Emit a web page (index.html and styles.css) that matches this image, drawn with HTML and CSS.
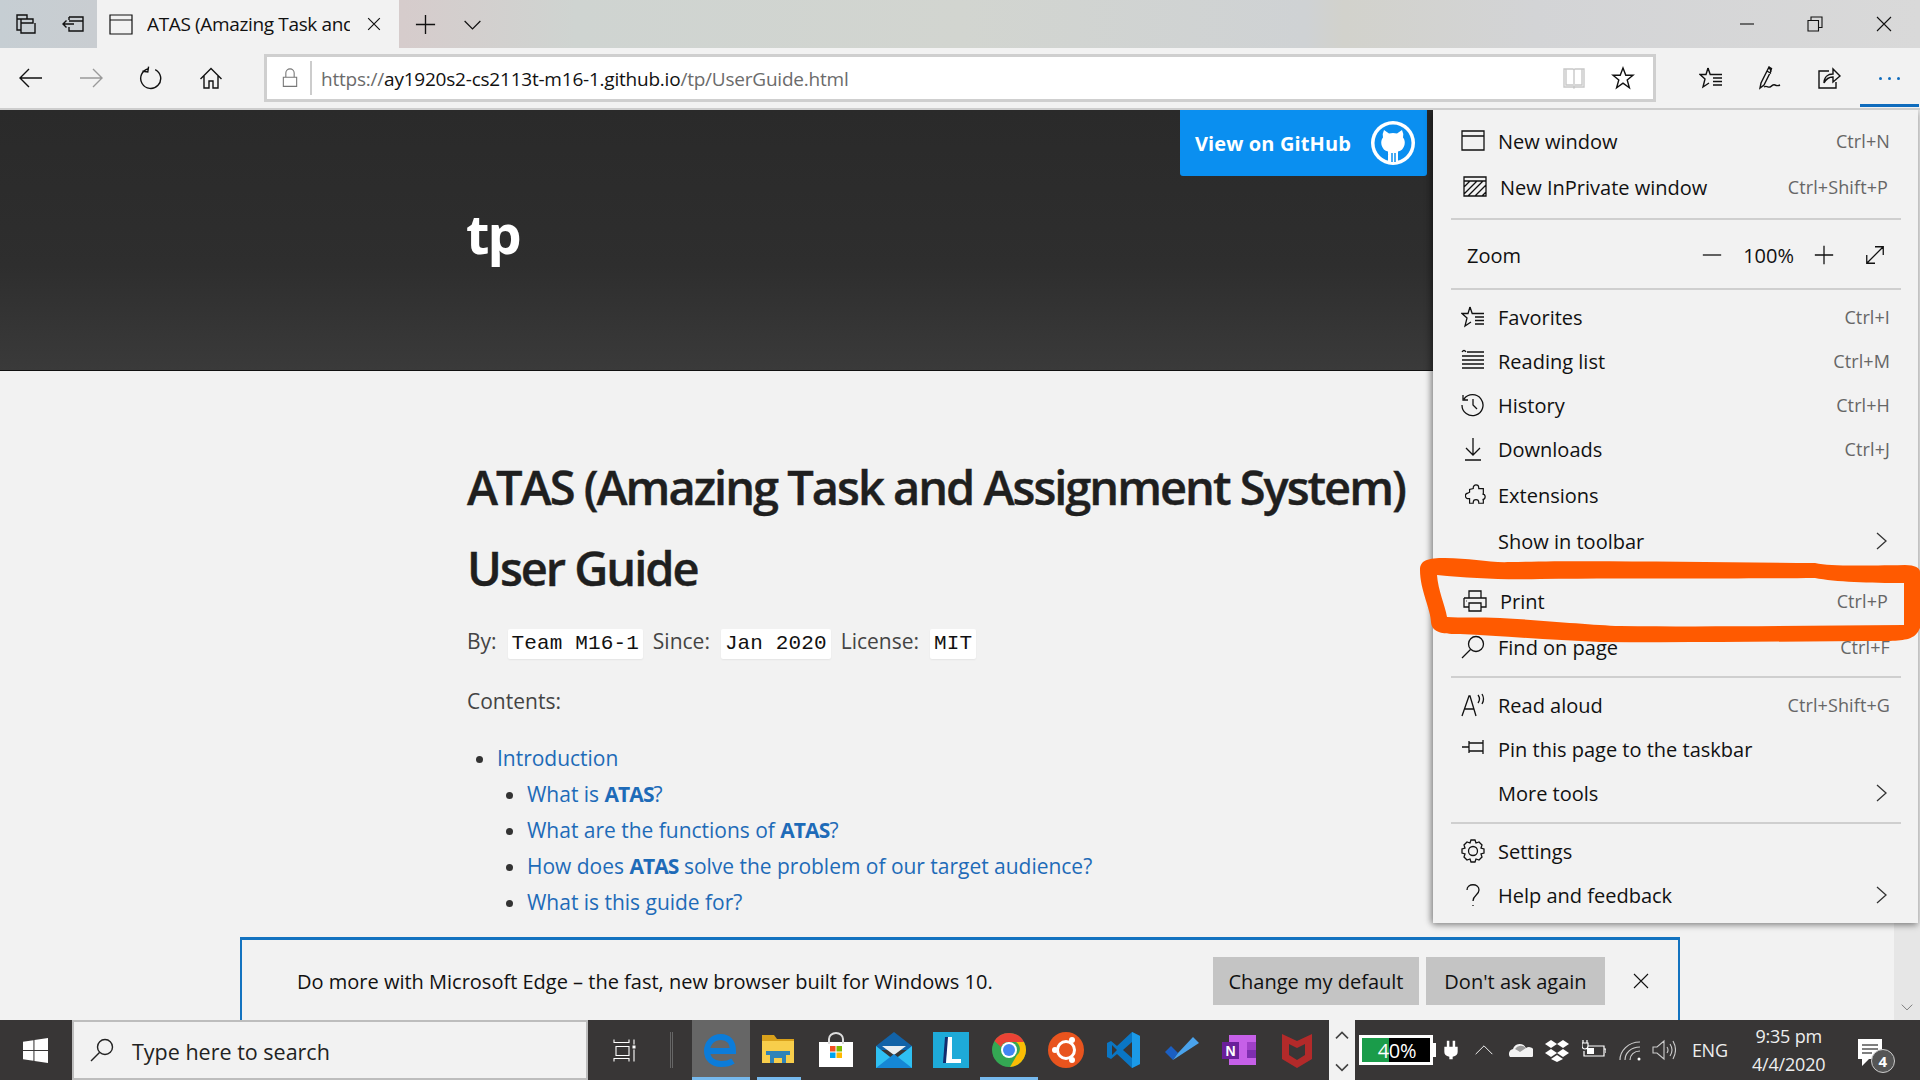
FILE: index.html
```html
<!DOCTYPE html>
<html lang="en">
<head>
<meta charset="utf-8">
<title>ATAS (Amazing Task and Assignment System)</title>
<link rel="stylesheet" href="styles.css">
</head>
<body>
<div class="window">
  <header class="titlebar">
    <span class="tslot"><svg class="ic" viewBox="0 0 24 24"><path d="M3 3h10v4H3zM3 7v11h4M7 7h12v4H7zM7 11v10h14V11M13 7V3"/></svg></span>
    <span class="tslot"><svg class="ic" viewBox="0 0 24 24"><path d="M8 5h14v14H8v-4M8 9h14M8 5v3M13 12H2M5.500 8.500L2 12l3.500 3.500"/></svg></span>
    <div class="tab">
      <svg class="ic tab-ic" viewBox="0 0 24 24"><path d="M1 3h22v19H1zM1 8h22"/></svg>
      <span class="tab-title">ATAS (Amazing Task and Assignment System) User Guide</span>
      <svg class="ic tab-x" viewBox="0 0 24 24"><path d="M5 5l14 14M19 5L5 19"/></svg>
    </div>
    <span class="tslot plus"><svg class="ic big" viewBox="0 0 24 24"><path d="M12 2v20M2 12h20"/></svg></span>
    <span class="tslot chev"><svg class="ic" viewBox="0 0 24 24"><path d="M3 8l9 9 9-9"/></svg></span>
    <div class="winctl">
      <span class="wslot"><svg class="ic sm" viewBox="0 0 16 16"><path d="M1 8h14"/></svg></span>
      <span class="wslot"><svg class="ic sm" viewBox="0 0 16 16"><path d="M1 4.500h10.500V15H1zM4 4.500V1h11v10.500h-3.500"/></svg></span>
      <span class="wslot"><svg class="ic sm" viewBox="0 0 16 16"><path d="M1 1l14 14M15 1L1 15"/></svg></span>
    </div>
  </header>

  <nav class="toolbar">
    <span class="nslot"><svg class="ic" viewBox="0 0 24 24"><path d="M23 12H1M10 3l-9 9 9 9"/></svg></span>
    <span class="nslot dim"><svg class="ic" viewBox="0 0 24 24"><path d="M1 12h22M14 3l9 9-9 9"/></svg></span>
    <span class="nslot"><svg class="ic" viewBox="0 0 24 24"><path d="M15 3a10 10 0 1 1-7 .2M8 1v5.500H2.500" transform="rotate(8 12 12)"/></svg></span>
    <span class="nslot"><svg class="ic" viewBox="0 0 24 24"><path d="M1.500 13L12 2.500 22.500 13M5 10v12h5v-7h4v7h5V10"/></svg></span>
    <div class="address">
      <svg class="ic lock" viewBox="0 0 24 24"><path d="M4 11h16v11H4zM7 11V6a5 5 0 0 1 10 0v5"/></svg>
      <span class="addr-sep"></span>
      <span class="url"><span class="url-dim">https://</span>ay1920s2-cs2113t-m16-1.github.io<span class="url-dim">/tp/UserGuide.html</span></span>
      <svg class="ic reader" viewBox="0 0 24 24"><path d="M2 3h9l1 1 1-1h9v18h-9l-1 1-1-1H2zM12 4v17M4 3v16h7M20 3v16h-7"/></svg>
      <svg class="ic star" viewBox="0 0 24 24"><path d="M12 2l2.800 7.200H22l-5.800 4.800 2.200 7.800L12 17.200 5.600 21.800 7.800 14 2 9.200h7.200z"/></svg>
    </div>
    <div class="nav-right">
      <span class="rslot"><svg class="ic" viewBox="0 0 24 24"><path d="M9 2l2.200 6.500H23M14 12h9M14 15.500h9M14 19h9M9 2L7 8.500H1l5 4.500-2 8 6-4"/></svg></span>
      <span class="rslot"><svg class="ic" viewBox="0 0 24 24"><path d="M11 1L3 17l-1 5 4-3 7-14zM9 5l4 2.500M11 1l2.500 1.500-1 3M6 21c3-2 4 1 6 0s3-3 5-2 3 1 5 0"/></svg></span>
      <span class="rslot"><svg class="ic" viewBox="0 0 24 24"><path d="M12 5H2v17h17v-6M7 17c0-6 4-9 9-9V3l7 7-7 6v-5c-4 0-7 2-9 6z"/></svg></span>
      <span class="rslot dots"><i></i><i></i><i></i></span>
    </div>
  </nav>

  <main class="page">
    <section class="hero"><h2 class="project">tp</h2></section>
    <article class="content">
      <h1>ATAS (Amazing Task and Assignment System) User Guide</h1>
      <p class="meta">By: <code>Team M16-1</code> Since: <code>Jan 2020</code> License: <code>MIT</code></p>
      <p class="contents">Contents:</p>
      <ul class="toc">
        <li><a>Introduction</a>
          <ul>
            <li><a>What is <b>ATAS</b>?</a></li>
            <li><a>What are the functions of <b>ATAS</b>?</a></li>
            <li><a>How does <b>ATAS</b> solve the problem of our target audience?</a></li>
            <li><a>What is this guide for?</a></li>
          </ul>
        </li>
      </ul>
    </article>

    <a class="gh-btn"><span>View on GitHub</span>
      <svg class="gh-ic" viewBox="0 0 44 44"><circle cx="22" cy="22" r="22" fill="#fff"/><circle cx="22" cy="22" r="18.500" fill="#0a8ff0"/><path fill="#fff" d="M13 9l5 3.500q4-1 8 0L31 9q2 4 1 7.500 2.500 3 1.500 7.500-1.500 5.500-6.500 6.500V41h-10V30.500Q12 29.500 10.500 24q-1-4.500 1.500-7.500Q11 13 13 9z"/><path fill="none" stroke="#0a8ff0" stroke-width="1.500" d="M10 32q4 2 7 1M21 32v9M24 32v9"/></svg>
    </a>

    <div class="scrollbar"><svg class="ic sb-down" viewBox="0 0 24 24"><path d="M3 8l9 9 9-9"/></svg></div>

    <aside class="banner">
      <span class="banner-text">Do more with Microsoft Edge – the fast, new browser built for Windows 10.</span>
      <span class="banner-btn btn-a">Change my default</span>
      <span class="banner-btn btn-b">Don't ask again</span>
      <svg class="ic banner-x" viewBox="0 0 16 16"><path d="M1 1l14 14M15 1L1 15"/></svg>
    </aside>

    <div class="menu">
      <div class="item g11"><svg class="ic mi" viewBox="0 0 24 24"><path d="M1 2h22v19H1zM1 7h22"/></svg><span class="label">New window</span><span class="key">Ctrl+N</span></div>
      <div class="item g4 shift"><svg class="ic mi" viewBox="0 0 24 24"><path d="M1 2h22v19H1zM1 6h22M1 12l6-6M1 19L14 6M5 21L20 6M12 21l11-11M19 21l4-4"/></svg><span class="label">New InPrivate window</span><span class="key">Ctrl+Shift+P</span></div>
      <hr class="sep g9">
      <div class="item zoom g15"><span class="zoom-label">Zoom</span>
        <svg class="ic zm z-minus" viewBox="0 0 24 24"><path d="M2 12h20"/></svg><span class="zoom-val">100%</span>
        <svg class="ic zm z-plus" viewBox="0 0 24 24"><path d="M12 2v20M2 12h20"/></svg>
        <svg class="ic zm z-full" viewBox="0 0 24 24"><path d="M3 21L21 3M12 3h9v9M3 12v9h9"/></svg></div>
      <hr class="sep g11">
      <div class="item g7"><svg class="ic mi" viewBox="0 0 24 24"><path d="M9 2l2.200 6.500H23M14 12h9M14 15.500h9M14 19h9M9 2L7 8.500H1l5 4.500-2 8 6-4"/></svg><span class="label">Favorites</span><span class="key">Ctrl+I</span></div>
      <div class="item g2"><svg class="ic mi" viewBox="0 0 24 24"><path d="M6 3h17M1 7h22M1 11h22M1 15h22M1 19h22M1 3q2-3 4 0"/></svg><span class="label">Reading list</span><span class="key">Ctrl+M</span></div>
      <div class="item g2"><svg class="ic mi" viewBox="0 0 24 24"><path d="M3 6a10.500 10.500 0 1 1-2 6M2 2v5h5M12 6v6l4 4"/></svg><span class="label">History</span><span class="key">Ctrl+H</span></div>
      <div class="item g2"><svg class="ic mi" viewBox="0 0 24 24"><path d="M12 1v17M5 11l7 7 7-7M4 23h16"/></svg><span class="label">Downloads</span><span class="key">Ctrl+J</span></div>
      <div class="item g4 shift ext"><svg class="ic mi" viewBox="0 0 24 24"><path d="M9 5V4a3 3 0 0 1 6 0v1h5v6h-1a3 3 0 0 1 0 6h1v4h-5v-1a3 3 0 0 0-6 0v1H5v-5H4a3 3 0 0 1-1-6l2-1V6z"/></svg><span class="label">Extensions</span></div>
      <div class="item g4"><span class="mi"></span><span class="label">Show in toolbar</span><svg class="ic arrow" viewBox="0 0 11 18"><path d="M1 1l9 8-9 8"/></svg></div>
      <div class="item g18 shift"><svg class="ic mi" viewBox="0 0 24 24"><path d="M6 9V2h12v7M1 9h22v9h-5M6 18H1V9M6 14h12v8H6zM3.500 12h.5"/></svg><span class="label">Print</span><span class="key">Ctrl+P</span></div>
      <div class="item g4"><svg class="ic mi" viewBox="0 0 24 24"><circle cx="15" cy="9" r="7.500"/><path d="M9.500 14.500L1 23"/></svg><span class="label">Find on page</span><span class="key">Ctrl+F</span></div>
      <hr class="sep g7">
      <div class="item g7"><svg class="ic mi" viewBox="0 0 24 24"><path d="M1 23L8 3h1l6 20M4 16h9M17 2q3 4 0 8M21 1q3 5 0 10"/></svg><span class="label">Read aloud</span><span class="key">Ctrl+Shift+G</span></div>
      <div class="item g2"><svg class="ic mi" viewBox="0 0 24 24"><path d="M1 10h7M8 4v12M8 6h4l3 0h7V3M22 3v14M22 14h-7l-3 0H8"/></svg><span class="label">Pin this page to the taskbar</span></div>
      <div class="item g2"><span class="mi"></span><span class="label">More tools</span><svg class="ic arrow" viewBox="0 0 11 18"><path d="M1 1l9 8-9 8"/></svg></div>
      <hr class="sep g7">
      <div class="item g7"><svg class="ic mi" viewBox="0 0 24 24"><circle cx="12" cy="12" r="4.500"/><path d="M10 1h4l1 3 3-1 3 3-1 3 3 1v4l-3 1 1 3-3 3-3-1-1 3h-4l-1-3-3 1-3-3 1-3-3-1v-4l3-1-1-3 3-3 3 1z"/></svg><span class="label">Settings</span></div>
      <div class="item g2"><svg class="ic mi" viewBox="0 0 24 24"><path d="M6 7c0-7 12-7 12 0 0 5-6 5-6 11M12 22v1"/></svg><span class="label">Help and feedback</span><svg class="ic arrow" viewBox="0 0 11 18"><path d="M1 1l9 8-9 8"/></svg></div>
    </div>
  </main>

  <footer class="taskbar">
    <span class="start"><svg class="win" viewBox="0 0 24 24"><path fill="#fff" d="M0 3.500l10-1.400v9.300H0zM11 2l13-2v11.400H11zM0 12.500h10v9.400L0 20.500zM11 12.500h13V24l-13-2z"/></svg></span>
    <div class="search"><svg class="ic s-ic" viewBox="0 0 24 24"><circle cx="15" cy="9" r="7.500"/><path d="M9.500 14.500L1 23"/></svg><span>Type here to search</span></div>
    <div class="taskview">
      <svg class="ic tv" viewBox="0 0 24 24"><path d="M1 1v3h15V1M3 8h13v9H3zM1 23v-3h15v3M21 1v5M21 11v12"/><rect x="19.500" y="7" width="3" height="3" fill="#fff" stroke="none"/></svg>
      <span class="tv-sep"></span>
    </div>
    <div class="apps">
      <span class="app active run"><svg viewBox="0 0 36 36"><path fill="none" stroke="#0c7cd9" stroke-width="6" d="M6 19h24C30 10 25 5 18 5 10 5 4 11 4 19c0 8 6 13 14 13 5 0 9-1 12-3"/></svg></span>
      <span class="app run2"><svg viewBox="0 0 36 36"><path fill="#d9a11b" d="M2 3h12l3 4h17v5H2z"/><path fill="#f8ce4b" d="M2 9h32v22H2z"/><path fill="#2f83b8" d="M6 19h24v4h-4v8h-4v-5h-8v5h-4v-8H6z"/></svg></span>
      <span class="app"><svg viewBox="0 0 36 36"><path fill="#fff" d="M1 10h34v25H1z"/><path fill="none" stroke="#ddd" stroke-width="2" d="M11 12V7a7 6 0 0 1 14 0v5"/><path fill="#f25022" d="M12 14h5.500v5.500H12z"/><path fill="#7fba00" d="M18.500 14H24v5.500h-5.500z"/><path fill="#00a4ef" d="M12 20.500h5.500V26H12z"/><path fill="#ffb900" d="M18.500 20.500H24V26h-5.500z"/></svg></span>
      <span class="app"><svg viewBox="0 0 36 36"><path fill="#1263a8" d="M0 14L18 0l18 14v4H0z"/><path fill="#e9eef2" d="M6 14h24L18 23z"/><path fill="#2fc0f2" d="M0 14l18 14 18-14v22H0z"/><path fill="#1587d6" d="M0 36l18-14 18 14z"/></svg></span>
      <span class="app"><svg viewBox="0 0 36 36"><path fill="#1eaad8" d="M0 0h36v36H0z"/><path fill="#122c6e" d="M12 5h4l-3 26h-3z"/><path fill="#fff" d="M15 5h4v22h9v4H13z"/></svg></span>
      <span class="app run"><svg viewBox="0 0 36 36"><circle cx="18" cy="18" r="17" fill="#34a853"/><path fill="#ea4335" d="M3.500 9A17 17 0 0 1 33 10H18a8 8 0 0 0-8 5z"/><path fill="#fbbc05" d="M33 10a17 17 0 0 1-14 25l7-12a8 8 0 0 0-1-13z"/><circle cx="18" cy="18" r="8" fill="#fff"/><circle cx="18" cy="18" r="6" fill="#4285f4"/></svg></span>
      <span class="app"><svg viewBox="0 0 36 36"><circle cx="18" cy="18" r="18" fill="#e8541e"/><circle cx="18" cy="18" r="8.500" fill="none" stroke="#fff" stroke-width="3"/><circle cx="7" cy="18" r="3" fill="#fff"/><circle cx="24" cy="8" r="3" fill="#fff"/><circle cx="24" cy="28" r="3" fill="#fff"/></svg></span>
      <span class="app"><svg viewBox="0 0 36 36"><path fill="#0a76c4" d="M26 0l8 4v28l-8 4-15-14-6 5-4-2V11l4-2 6 5z"/><path fill="#1b9ae8" d="M26 0l8 4v28l-8 4z"/><path fill="#383636" d="M6 13v10l5-5zM26 10l-9 8 9 8z"/></svg></span>
      <span class="app"><svg viewBox="0 0 36 36"><path fill="#1b5fc2" d="M1 20l6-6 7 7-5 7z"/><path fill="#4aa3ec" d="M14 21L29 5l6 6-26 17z"/></svg></span>
      <span class="app"><svg viewBox="0 0 36 36"><path fill="#c660e8" d="M8 3h27v30H8z"/><path fill="#a040c8" d="M26 10h9v8h-9z"/><path fill="#7e2eb0" d="M26 18h9v8h-9z"/><path fill="#6a1f9a" d="M1 10h17v17H1z"/><text class="on-n" x="9.500" y="24">N</text></svg></span>
      <span class="app"><svg viewBox="0 0 36 36"><path fill="#b32a2a" d="M3 2l15 7 15-7v25l-15 9-15-9z"/><path fill="#383636" d="M10 12l8 4 8-4v11l-8 5-8-5z"/></svg></span>
    </div>
    <div class="updown"><svg class="ic ud" viewBox="0 0 24 24"><path d="M3 17l9-9 9 9"/></svg><svg class="ic ud" viewBox="0 0 24 24"><path d="M3 8l9 9 9-9"/></svg></div>
    <div class="battery"><span class="bat-fill"></span><span class="bat-text">40%</span></div>
    <div class="tray">
      <svg class="tr plug" viewBox="0 0 24 24"><path fill="#fff" d="M7 1h3v7H7zM14 1h3v7h-3zM4 8h16v6a8 6 0 0 1-6 6v3h-4v-3a8 6 0 0 1-6-6z"/></svg>
      <svg class="tr t-chev ic" viewBox="0 0 24 24"><path d="M2 17l10-10 10 10"/></svg>
      <svg class="tr t-cloud" viewBox="0 0 24 24"><path fill="#f2f2f2" d="M1 19a5 5 0 0 1 3-8 7 7 0 0 1 13-1 5 5 0 0 1 6 9z"/><path fill="#9a9a9a" d="M6 11a7 7 0 0 1 11-1l-6 4q-3-2-5-3z"/></svg>
      <svg class="tr t-drop" viewBox="0 0 24 24"><path fill="#fff" d="M6 2l6 4-6 4-6-4zM18 2l6 4-6 4-6-4zM6 11l6 4-6 4-6-4zM18 11l6 4-6 4-6-4zM12 17l6 4-6 3-6-3z"/></svg>
      <svg class="tr t-bat ic" viewBox="0 0 24 24"><path d="M6 8h16v10H2v-5M22 11h2v4M1 2v3M5 2v3M0 5h6v3a3 3 0 0 1-6 0z"/><rect x="5" y="10" width="7" height="6" fill="#fff" stroke="none"/></svg>
      <svg class="tr t-wifi ic" viewBox="0 0 24 24"><path d="M1 22C1 13 9 4 21 4M6 22c0-7 6-13 15-13M11 22c0-5 4-9 10-9"/><circle cx="20" cy="21" r="1.500" fill="#fff" stroke="none"/></svg>
      <svg class="tr t-spk ic" viewBox="0 0 24 24"><path d="M1 9h4l7-6v18l-7-6H1zM15 9q2 3 0 6M18 6q4 6 0 12M21 3q5 9 0 18"/></svg>
      <span class="eng">ENG</span>
      <div class="clock"><span>9:35 pm</span><span>4/4/2020</span></div>
      <div class="notif"><svg class="n-bubble" viewBox="0 0 26 30"><path fill="#fff" d="M1 1h24v20H12l-7 7v-7H1z"/><path stroke="#555" stroke-width="1.500" d="M5 7h16M5 11h16M5 15h10"/></svg><span class="badge">4</span></div>
    </div>
  </footer>
</div>

<svg class="scribble" viewBox="0 0 1920 1080"><path fill="#ff5a00" fill-rule="evenodd" d="M1420 570C1420 560 1428 558 1445 558C1470 558 1490 563 1510 562C1580 560 1700 562 1815 563C1830 566 1850 566 1905 565C1915 565 1920 568 1920 572L1920 628C1915 640 1905 640 1890 641C1800 641 1700 643 1600 642C1550 640 1500 636 1460 634C1445 634 1432 634 1431 622C1431 610 1420 590 1420 570ZM1437 575C1470 578 1500 580 1540 579C1640 578 1750 579 1815 578C1835 582 1870 583 1904 583L1904 625C1800 626 1700 627 1620 626C1590 625 1540 620 1500 618C1480 617 1460 618 1447 617C1445 605 1438 590 1437 575Z"/></svg>
</body>
</html>
```

FILE: styles.css
```css
* { box-sizing: border-box; }
html, body { margin: 0; padding: 0; height: 100%; overflow: hidden; }
body { font-family: "Open Sans", "Noto Sans", sans-serif; color: #111; background: #f2f2f2; }
.window { width: 1920px; height: 1080px; display: flex; flex-direction: column; }
.ic { fill: none; stroke: currentColor; stroke-width: 1.4; width: 24px; height: 24px; display: block; flex: none; }

/* title bar */
.titlebar { height: 48px; display: flex; align-items: center; padding-left: 2px; color: #111;
  background: linear-gradient(90deg, #c6ced3 0, #c9cdd1 5%, #d6cccc 21%, #cfd4d1 30%, #d2d5d0 50%, #cfd2d4 68%, #d2d2cc 70%, #d3d4d6 80%, #d9d9d9 100%); }
.tslot { width: 47px; display: flex; justify-content: center; }
.tslot + .tslot { margin-right: 1px; }
.tab { width: 302px; height: 48px; background: #f2f2f2; display: flex; align-items: center; padding-left: 12px; margin-right: 0; }
.tab-ic { width: 24px; height: 24px; stroke-width: 1.200; }
.tab-title { width: 203px; margin-left: 14px; white-space: nowrap; overflow: hidden; font-size: 19px; letter-spacing: -.35px; }
.tab-x { width: 20px; height: 20px; margin-left: 14px; }
.plus { margin-left: 3px; }
.plus .big { width: 23px; height: 23px; }
.chev { margin-left: 0; width: 46px; }
.chev .ic { width: 21px; height: 21px; }
.winctl { margin-left: auto; display: flex; padding-right: 2px; }
.wslot { width: 68.500px; display: flex; justify-content: center; }
.ic.sm { width: 16px; height: 16px; stroke-width: 1.100; }

/* toolbar */
.toolbar { height: 62px; display: flex; align-items: center; padding: 0 1px; background: #f2f2f2; border-bottom: 2px solid #cdcdcd; color: #111; position: relative; }
.nslot { width: 60px; display: flex; justify-content: center; }
.dim { color: #9a9a9a; }
.address { width: 1392px; height: 48px; margin-left: 23px; background: #fff; border: 3px solid #cfcfcf; display: flex; align-items: center; padding-left: 13px; }
.lock { width: 20px; height: 22px; color: #777; stroke-width: 1.300; }
.addr-sep { width: 2px; height: 34px; background: #ccc; margin-left: 10px; }
.url { margin-left: 9px; padding-top: 1px; font-size: 19px; letter-spacing: -.22px; white-space: nowrap; color: #111; }
.url-dim { color: #6b6b6b; }
.reader { margin-left: auto; color: #c8c8c8; }
.star { margin: 0 18px 0 25px; width: 24px; height: 24px; }
.nav-right { margin-left: auto; display: flex; align-items: center; }
.rslot { width: 59px; display: flex; justify-content: center; }
.rslot.dots { width: 61px; padding-left: 2px; }
.dots { gap: 6px; align-items: center; height: 24px; position: relative; }
.dots i { width: 3px; height: 3px; border-radius: 50%; background: #0f6cbd; display: block; }
.dots::after { content: ""; position: absolute; left: 2px; right: 0; top: 38px; height: 3px; background: #0f6cbd; }

/* page */
.page { flex: 1; position: relative; overflow: hidden; background: #f2f2f2; }
.hero { height: 261px; background: linear-gradient(180deg, #2a2a2a 0, #2e2e2e 60%, #3a3a3a 100%); border-bottom: 1px solid #111; padding: 87px 0 0 466px; }
.project { margin: 0; color: #fff; font-size: 54px; line-height: 72px; font-weight: 700; letter-spacing: -2px; }
.content { padding: 76px 0 0 467px; width: 1440px; color: #444; font-size: 21px; }
h1 { margin: 0; width: 960px; font-size: 47px; line-height: 81px; font-weight: 600; letter-spacing: -2.020px; color: #1f1f1f; -webkit-text-stroke: .4px #1f1f1f; }
.meta { margin: 16px 0 0; line-height: 32px; }
code { display: inline-block; font-family: "Liberation Mono", monospace; font-size: 21px; line-height: 30px; background: #fff; padding: 0 4px; border-radius: 2px; color: #111; letter-spacing: .13px; box-shadow: 0 1px 2px rgba(0,0,0,.06); margin: 0 4.500px 0 5.500px; }
.contents { margin: 26px 0 0; line-height: 32px; }
.toc { margin: 23px 0 0; padding: 0 0 0 30px; line-height: 36px; letter-spacing: -.02px; list-style-type: disc; }
.toc ul { margin: 0; padding: 0 0 0 30px; list-style-type: disc; }
.toc a { color: #1e6bb8; }
.toc b { font-weight: 700; letter-spacing: -.9px; }
.toc li::marker { color: #333; }

.gh-btn { position: absolute; left: 1180px; top: 0; width: 247px; height: 66px; background: #0a8ff0; color: #fff; font-weight: 700; font-size: 20px; letter-spacing: .12px; display: flex; align-items: center; justify-content: space-between; padding: 0 12px 0 15px; border-radius: 0 0 3px 3px; }
.gh-ic { width: 44px; height: 44px; }

.scrollbar { position: absolute; right: 0; top: 0; bottom: 0; width: 26px; background: #e6e6e6; }
.sb-down { position: absolute; left: 6px; bottom: 6px; width: 14px; height: 14px; color: #666; }

.banner { position: absolute; left: 240px; top: 827px; width: 1440px; height: 90px; background: #f2f2f2; border: 2px solid #1373c0; border-top-width: 3px; border-bottom: none; display: flex; align-items: center; padding: 0 0 5px 55px; }
.banner-text { font-size: 20px; width: 916px; white-space: nowrap; }
.banner-btn { height: 48px; background: #c4c4c4; display: flex; align-items: center; justify-content: center; font-size: 20px; }
.btn-a { width: 206px; }
.btn-b { width: 179px; margin-left: 7px; }
.banner-x { width: 16px; height: 16px; margin-left: 28px; stroke-width: 1.100; }

/* menu */
.menu { position: absolute; left: 1433px; top: 0; width: 485px; height: 813px; background: #f2f2f2; box-shadow: -3px 0 6px rgba(0,0,0,.28), 0 3px 6px rgba(0,0,0,.28); display: flex; flex-direction: column; align-items: stretch; }
.item { height: 42px; flex: none; display: flex; align-items: center; padding: 0 28px 2px 28px; font-size: 20px; white-space: nowrap; }
.mi { width: 24px; height: 24px; margin-right: 13px; stroke-width: 1.300; color: #111; flex: none; }
.shift { padding-left: 30px; padding-right: 30px; }
.ext .mi { margin-left: 2px; margin-right: 11px; width: 22px; height: 22px; }
.label { flex: 1; }
.key { color: #666; font-size: 18px; letter-spacing: .1px; }
.arrow { width: 11px; height: 18px; margin-right: 3px; color: #333; stroke-width: 1.300; }
.sep { height: 2px; border: 0; background: #cfcfcf; margin-left: 18px; margin-right: 17px; flex: none; margin-bottom: 0; }
.zoom { padding-left: 34px; padding-right: 29px; }
.zoom-label { flex: 1; }
.zm { width: 22px; height: 22px; }
.zoom-val { margin: 0 19px 0 20px; }
.z-full { margin-left: 29px; margin-right: 3px; }
.g1 { margin-top: 1px; } .g2 { margin-top: 2px; } .g3 { margin-top: 3px; } .g4 { margin-top: 4px; }
.g5 { margin-top: 5px; } .g6 { margin-top: 6px; } .g7 { margin-top: 7px; } .g8 { margin-top: 8px; }
.g9 { margin-top: 9px; } .g11 { margin-top: 11px; } .g15 { margin-top: 15px; } .g18 { margin-top: 18px; }

.scribble { position: absolute; left: 0; top: 0; width: 1920px; height: 1080px; pointer-events: none; }

/* taskbar */
.taskbar { height: 60px; flex: none; background: #383636; display: flex; align-items: stretch; color: #fff; position: relative; }
.start { width: 72px; display: flex; align-items: center; justify-content: center; padding-right: 2px; }
.win { width: 25px; height: 25px; }
.search { width: 516px; background: #f2f2f2; border: 2px solid #bdbdbd; display: flex; align-items: center; padding: 3px 0 0 16px; color: #222; font-size: 21.500px; }
.s-ic { width: 24px; height: 24px; margin: -3px 18px 0 0; stroke-width: 1.400; }
.taskview { width: 104px; display: flex; align-items: center; padding-left: 25px; }
.tv { width: 24px; height: 27px; stroke-width: 1.100; color: #fff; }
.tv-sep { width: 3px; height: 36px; border-left: 1px solid #666; border-right: 1px solid #666; margin-left: 33px; }
.apps { display: grid; grid-template-columns: repeat(11, 57.600px); }
.app { display: flex; align-items: center; justify-content: center; position: relative; }
.app svg { width: 36px; height: 38px; display: block; margin-top: 0; }
.active { background: #666; }
.run::after, .run2::after { content: ""; position: absolute; left: 0; right: 0; bottom: 0; height: 3px; background: #76b9ed; }
.run2::after { left: 7px; right: 6px; }
.on-n { fill: #fff; font-family: "Liberation Sans", sans-serif; font-weight: 700; font-size: 14px; text-anchor: middle; }
.updown { width: 26px; margin-left: 3.400px; background: #f2f2f2; color: #444; display: flex; flex-direction: column; align-items: center; justify-content: space-between; padding: 7px 0 5px; }
.ud { width: 16px; height: 16px; stroke-width: 2.400; }
.battery { position: relative; width: 74px; height: 30px; margin: 15px 0 0 4px; border: 3px solid #fff; background: #000; display: flex; align-items: center; justify-content: center; }
.battery::after { content: ""; position: absolute; right: -6px; top: 5px; width: 3px; height: 14px; background: #fff; }
.bat-fill { position: absolute; left: 0; top: 0; bottom: 0; width: 27px; background: #1a9c4a; }
.bat-text { position: relative; font-size: 20px; letter-spacing: -.3px; padding-left: 2px; }
.tray { flex: 1; display: flex; align-items: center; position: relative; padding-left: 4px; }
.tr { flex: none; width: 24px; height: 24px; }
.plug { width: 20px; height: 30px; margin-left: 4px; }
.t-chev { width: 20px; height: 20px; margin-left: 13px; stroke-width: 1.100; }
.t-cloud { margin-left: 15px; height: 24px; }
.t-drop { margin-left: 12px; }
.t-bat { margin-left: 13px; stroke-width: 1.200; }
.t-wifi { margin-left: 13px; stroke-width: 1.200; color: #ccc; }
.t-spk { margin-left: 9px; stroke-width: 1.100; color: #ccc; }
.eng { margin-left: 16px; font-size: 18px; letter-spacing: -.3px; color: #eee; }
.clock { width: 120px; margin-left: 1px; display: flex; flex-direction: column; align-items: center; font-size: 18px; line-height: 28px; color: #eee; letter-spacing: -.2px; }
.notif { position: relative; width: 40px; height: 40px; margin-left: 1px; }
.n-bubble { position: absolute; left: 7px; top: 8px; width: 26px; height: 30px; }
.badge { position: absolute; left: 21px; top: 19px; width: 24px; height: 24px; border-radius: 50%; background: #555; border: 1px solid #ccc; font-size: 15px; font-weight: 700; display: flex; align-items: center; justify-content: center; }
```
